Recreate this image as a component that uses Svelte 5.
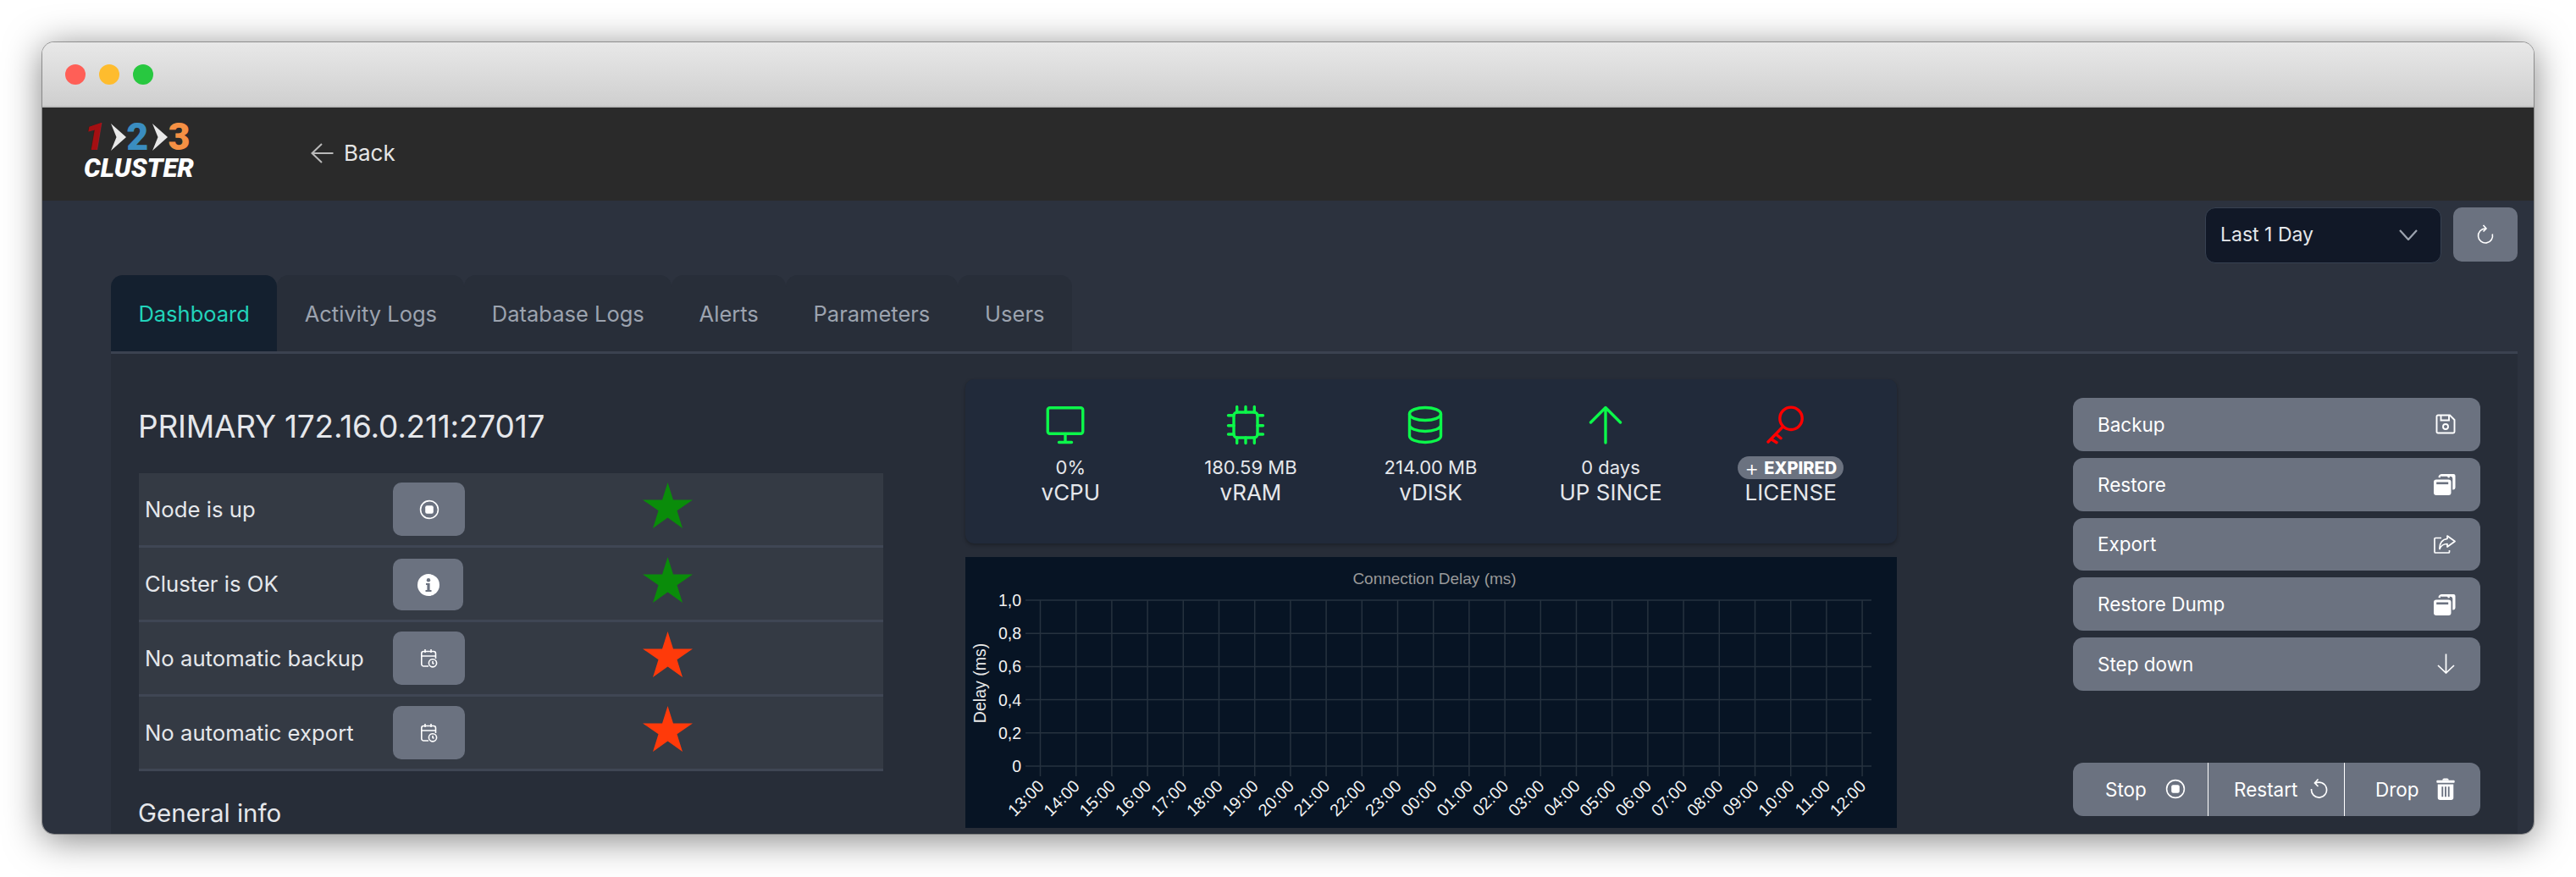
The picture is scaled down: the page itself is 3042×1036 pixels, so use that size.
<script>
  const tabs = ['Dashboard', 'Activity Logs', 'Database Logs', 'Alerts', 'Parameters', 'Users'];
  const checks = [
    { label: 'Node is up', icon: 'stop', ok: true },
    { label: 'Cluster is OK', icon: 'info', ok: true },
    { label: 'No automatic backup', icon: 'cal', ok: false },
    { label: 'No automatic export', icon: 'cal', ok: false }
  ];
  const stats = [
    { icon: 'monitor', value: '0%', label: 'vCPU' },
    { icon: 'cpu', value: '180.59 MB', label: 'vRAM' },
    { icon: 'disk', value: '214.00 MB', label: 'vDISK' },
    { icon: 'up', value: '0 days', label: 'UP SINCE' },
    { icon: 'key', value: '', label: 'LICENSE' }
  ];
  const actions = [
    { label: 'Backup', icon: 'save' },
    { label: 'Restore', icon: 'stack' },
    { label: 'Export', icon: 'share' },
    { label: 'Restore Dump', icon: 'stack' },
    { label: 'Step down', icon: 'down' }
  ];
  const hours = ['13', '14', '15', '16', '17', '18', '19', '20', '21', '22', '23', '00', '01', '02', '03', '04', '05', '06', '07', '08', '09', '10', '11', '12'];
  const yTicks = ['1,0', '0,8', '0,6', '0,4', '0,2', '0'];
</script>

{#snippet stopIcon()}
  <svg class="i24" viewBox="0 0 24 24" fill="none" stroke="currentColor" stroke-width="1.6"><circle cx="12" cy="12" r="10.4" /><rect x="7.2" y="7.2" width="9.6" height="9.6" rx="2" fill="currentColor" stroke="none" /></svg>
{/snippet}

{#snippet stackIcon()}
  <svg class="i26" viewBox="0 0 26 26"><rect x="0" y="7.5" width="20.5" height="18.5" rx="3" fill="#fff" /><rect x="3.2" y="10.5" width="14" height="2.6" fill="#6b7280" /><path d="M6.5 5.2C6.7 3.2 8 2 10 2H14.5C16.4 2 17.6 3.2 18 5.2" fill="none" stroke="#fff" stroke-width="2.2" /><path d="M9 1h14.5a2 2 0 0 1 2 2v14a2.4 2.4 0 0 1-2.4 2.4h-.8V6.8A3 3 0 0 0 19.3 3.8L9 3.8z" fill="#fff" /></svg>
{/snippet}

<div class="window">
  <div class="titlebar">
    <span class="dot red"></span>
    <span class="dot yellow"></span>
    <span class="dot green"></span>
  </div>

  <header class="header">
    <div class="logo">
      <div class="logo-top">
        <span class="n1">1</span>
        <svg class="chev c1" viewBox="0 0 18 32"><path d="M0 0L18 16L0 32L6.5 16z" fill="#e8e8e8" /></svg>
        <span class="n2">2</span>
        <svg class="chev c2" viewBox="0 0 18 32"><path d="M0 0L18 16L0 32L6.5 16z" fill="#e8e8e8" /></svg>
        <span class="n3">3</span>
      </div>
      <div class="logo-name">CLUSTER</div>
    </div>
    <div class="back">
      <svg class="back-arrow" viewBox="0 0 27 24" fill="none" stroke="#b9b9b9" stroke-width="2"><path d="M26.5 12H1.5M13 1L1.5 12L13 23" /></svg>
      <span>Back</span>
    </div>
  </header>

  <main class="main">
    <div class="toolbar">
      <div class="select">
        <span>Last 1 Day</span>
        <svg class="chevron" viewBox="0 0 22 13" fill="none" stroke="#9ca3af" stroke-width="2.2"><path d="M1 1L11 12L21 1" /></svg>
      </div>
      <button class="refresh" aria-label="Refresh">
        <svg class="i24" viewBox="0 0 24 24" fill="none" stroke="#fff" stroke-width="1.6"><path d="M12 5A8.5 8.5 0 1 0 20.3 11.5M9.5 1L13 5L9.5 8.5" /></svg>
      </button>
    </div>

    <nav class="tabs">
      {#each tabs as tab, i}
        <div class="tab" class:active={i === 0}>{tab}</div>
      {/each}
    </nav>

    <section class="panel">
      <div class="col-left">
        <h1>PRIMARY 172.16.0.211:27017</h1>
        <div class="checks">
          {#each checks as c}
            <div class="check">
              <span class="check-label">{c.label}</span>
              <button class="check-btn" aria-label={c.label}>
                {#if c.icon === 'stop'}
                  {@render stopIcon()}
                {:else if c.icon === 'info'}
                  <svg class="i26" viewBox="0 0 26 26"><circle cx="13" cy="13" r="13" fill="#fff" /><circle cx="13" cy="7.2" r="2.2" fill="#6b7280" /><path d="M10 11h4.6v8H16.5v2h-7v-2h1.9v-6H10z" fill="#6b7280" /></svg>
                {:else}
                  <svg class="i24" viewBox="0 0 24 24" fill="none" stroke="#fff" stroke-width="1.6"><path d="M19.5 12V6A2.5 2.5 0 0 0 17 3.5H5.3A2.5 2.5 0 0 0 2.8 6V18.5A2.5 2.5 0 0 0 5.3 21H11M7 1v4M14 1v4M2.8 9H19.5" /><circle cx="16" cy="17.3" r="4.6" /><path d="M16 15v2.5l1.4.8" /></svg>
                {/if}
              </button>
              <svg class="star" class:bad={!c.ok} viewBox="0 0 59 54"><path d="M29.5 0L36 20.5H59L40.5 33.3L47 54L29.5 41.5L12 54L18.5 33.3L0 20.5H23z" /></svg>
            </div>
          {/each}
        </div>
        <h2>General info</h2>
      </div>

      <div class="col-mid">
        <div class="stats">
          {#each stats as s}
            <div class="stat">
              <svg class="stat-icon" class:alert={s.icon === 'key'} viewBox="0 0 48 48" fill="none" stroke="currentColor" stroke-width="3.4" stroke-linecap="round" stroke-linejoin="round">
                {#if s.icon === 'monitor'}
                  <rect x="3.25" y="3.75" width="41.5" height="30.5" rx="2.5" /><path d="M24 34.5v10M16.5 44.5h15" />
                {:else if s.icon === 'cpu'}
                  <rect x="10" y="9" width="28" height="30" rx="4" /><path d="M13.7 2.5V9M24 2.5V9M34.3 2.5V9M13.7 39v6.5M24 39v6.5M34.3 39v6.5M3.5 12.7H10M3.5 24.7H10M3.5 35H10M38 12.7h6.5M38 24.7h6.5M38 35h6.5" />
                {:else if s.icon === 'disk'}
                  <ellipse cx="24" cy="11" rx="18.5" ry="7.5" /><path d="M5.5 11V37c0 4 8 7.5 18.5 7.5S42.5 41 42.5 37V11M5.5 24c0 4 8 7.5 18.5 7.5S42.5 28 42.5 24" />
                {:else if s.icon === 'up'}
                  <path d="M24 45V3.5M6.5 21L24 3.5L41.5 21" />
                {:else}
                  <circle cx="30" cy="16.3" r="13.2" /><path d="M20.5 26L3 44M12.3 35L18 39.7M7 41L13 44.7" />
                {/if}
              </svg>
              {#if s.value}
                <div class="stat-value">{s.value}</div>
              {:else}
                <div class="badge"><span class="plus">+</span><b>EXPIRED</b></div>
              {/if}
              <div class="stat-label">{s.label}</div>
            </div>
          {/each}
        </div>

        <div class="chart">
          <svg viewBox="0 0 1100 320" width="1100" height="320">
            <text class="c-title" x="554" y="32" text-anchor="middle">Connection Delay (ms)</text>
            <text class="c-axis" transform="translate(24 149) rotate(-90)" text-anchor="middle">Delay (ms)</text>
            {#each yTicks as t, i}
              <line class="grid" x1="71" x2="1070" y1={51 + 39.2 * i} y2={51 + 39.2 * i} />
              <text class="c-tick" x="66" y={58 + 39.2 * i} text-anchor="end">{t}</text>
            {/each}
            {#each hours as h, i}
              <line class="grid" x1={88.5 + 42.2 * i} x2={88.5 + 42.2 * i} y1="51" y2="259" />
              <text class="c-tick x" transform="translate({94 + 42.2 * i} 272) rotate(-45)" text-anchor="end">{h}:00</text>
            {/each}
          </svg>
        </div>
      </div>

      <div class="col-right">
        <div class="actions">
          {#each actions as a}
            <button class="action">
              <span>{a.label}</span>
              {#if a.icon === 'save'}
                <svg class="i24" viewBox="0 0 24 24" fill="none" stroke="#fff" stroke-width="1.9"><path d="M3 1.5H17L22.5 7V21A1.5 1.5 0 0 1 21 22.5H3A1.5 1.5 0 0 1 1.5 21V3A1.5 1.5 0 0 1 3 1.5z" /><path d="M6.5 1.5V7.5H16V1.5" /><circle cx="12" cy="15" r="3" /></svg>
              {:else if a.icon === 'stack'}
                {@render stackIcon()}
              {:else if a.icon === 'share'}
                <svg class="i26" viewBox="0 0 26 22" fill="none" stroke="#fff" stroke-width="1.7"><path d="M9 3.5H2A1 1 0 0 0 1 4.5V20A1 1 0 0 0 2 21H17.5A1 1 0 0 0 18.5 20V18" /><path d="M16 1L25 7.5L16 14V10.5C11.5 10.5 8.5 12.5 7 16.5C6.5 10 10 5 16 4.5z" stroke-linejoin="round" /></svg>
              {:else}
                <svg class="i24" viewBox="0 0 24 24" fill="none" stroke="#fff" stroke-width="1.7"><path d="M12.5 0.5V23M3 14L12.5 23L22 14" /></svg>
              {/if}
            </button>
          {/each}
        </div>
        <div class="group">
          <button class="part p1"><span>Stop</span>{@render stopIcon()}</button>
          <button class="part p2"><span>Restart</span>
            <svg class="i24" viewBox="0 0 24 24" fill="none" stroke="#fff" stroke-width="1.7"><path d="M8.2 5.2A9 9 0 1 1 3.6 12M11.5 0.5L7.5 5L11.5 9" /></svg>
          </button>
          <button class="part p3"><span>Drop</span>
            <svg class="i26" viewBox="0 0 24 28"><rect x="0.5" y="3" width="23" height="3.2" rx="1" fill="#fff" /><path d="M8 3C8 1.4 9 .6 10 .6h4c1 0 2 .8 2 2.4z" fill="#fff" /><path fill-rule="evenodd" d="M2 8H22V25A3 3 0 0 1 19 28H5A3 3 0 0 1 2 25zM7 11V24H9V11zM11 11V24H13V11zM15 11V24H17V11z" fill="#fff" /></svg>
          </button>
        </div>
      </div>
    </section>
  </main>
</div>

<style>
  :global(body) {
    margin: 0;
    background: #fff;
    overflow: hidden;
  }
  :global(#app) {
    height: 1036px;
    padding: 50px 50px 0;
    box-sizing: border-box;
  }
  button {
    border: 0;
    padding: 0;
    color: #fff;
    font: inherit;
    background: #6b7280;
  }
  svg {
    display: block;
    flex: none;
  }
  .i24 {
    width: 24px;
    height: 24px;
  }
  .i26 {
    width: 26px;
    height: 26px;
  }
  .window {
    width: 2942px;
    height: 935px;
    display: flex;
    flex-direction: column;
    border-radius: 14px;
    overflow: hidden;
    box-shadow: 0 0 0 1px rgba(90, 90, 90, 0.55), 0 6px 44px rgba(0, 0, 0, 0.5);
    font-family: Inter, "Liberation Sans", sans-serif;
    color: #e5e7eb;
  }
  .titlebar {
    flex: none;
    height: 77px;
    box-sizing: border-box;
    display: flex;
    align-items: center;
    gap: 16px;
    padding-left: 27px;
    background: linear-gradient(#e8e8e8, #cfcfcf);
    border-bottom: 2px solid #bdbdbd;
  }
  .dot {
    width: 24px;
    height: 24px;
    border-radius: 50%;
  }
  .red { background: #ff5f57; }
  .yellow { background: #febc2e; }
  .green { background: #28c840; }
  .header {
    flex: none;
    height: 110px;
    display: flex;
    align-items: center;
    padding-left: 49px;
    background: #2a2a2a;
  }
  .logo {
    width: 130px;
    margin-top: -6px;
    font-family: Roboto, sans-serif;
  }
  .logo-top {
    display: flex;
    align-items: center;
    height: 34px;
    font-size: 45px;
    font-weight: 900;
    line-height: 34px;
  }
  .n1 { color: #a50f12; font-style: italic; }
  .n2 { color: #3a8dc0; }
  .n3 { color: #f59044; }
  .chev {
    width: 18px;
    height: 32px;
  }
  .c1 { margin-left: 7px; }
  .c2 { margin-left: 5px; }
  .logo-name {
    margin-top: 6px;
    font-size: 31px;
    line-height: 28px;
    font-weight: 900;
    font-style: italic;
    color: #fff;
  }
  .back {
    display: flex;
    align-items: center;
    gap: 12px;
    margin-left: 138px;
    margin-top: -3px;
    font-size: 26px;
    color: #e5e5e5;
  }
  .back-arrow {
    width: 27px;
    height: 24px;
  }
  .main {
    flex: 1;
    min-height: 0;
    padding: 8px 19px 0 81px;
    background: #2c323e;
  }
  .toolbar {
    height: 80px;
    display: flex;
    justify-content: flex-end;
    align-items: flex-start;
    gap: 14px;
  }
  .select {
    width: 279px;
    height: 66px;
    box-sizing: border-box;
    display: flex;
    align-items: center;
    justify-content: space-between;
    padding: 0 27px 2px 17px;
    background: #111827;
    border: 1px solid #374151;
    border-radius: 12px;
    font-size: 23px;
    color: #e5e7eb;
  }
  .chevron {
    width: 22px;
    height: 13px;
  }
  .refresh {
    width: 76px;
    height: 64px;
    display: flex;
    align-items: center;
    justify-content: center;
    border-radius: 10px;
  }
  .tabs {
    height: 93px;
    box-sizing: border-box;
    display: flex;
    border-bottom: 3px solid #3b4250;
  }
  .tab {
    padding: 0 32.4px;
    display: flex;
    align-items: center;
    border-radius: 14px 14px 0 0;
    background: #282e39;
    font-size: 25.5px;
    color: #9ca3af;
  }
  .tab.active {
    background: #14202f;
    color: #22d3bb;
  }
  .panel {
    height: 567px;
    box-sizing: border-box;
    display: grid;
    grid-template-columns: 879px 1100px 592px;
    column-gap: 97px;
    padding: 30px 0 0 33px;
    background: #272d38;
    overflow: hidden;
  }
  .col-left h1 {
    margin: 33px 0 0 -1px;
    font-size: 37px;
    line-height: 46px;
    letter-spacing: -0.22px;
    font-weight: 400;
    color: #e5e7eb;
  }
  .checks {
    margin-top: 32px;
    background: #343a44;
  }
  .check {
    height: 85px;
    display: flex;
    align-items: center;
    padding-left: 7px;
    border-bottom: 3px solid #3f4654;
    font-size: 25.7px;
  }
  .check-label {
    width: 293px;
  }
  .check-btn {
    width: 85px;
    height: 63px;
    display: flex;
    align-items: center;
    justify-content: center;
    border-radius: 10px;
  }
  .check:nth-child(2) .check-btn {
    width: 83px;
    height: 61px;
    margin: 2px 2px 0 0;
  }
  .star {
    width: 59px;
    height: 54px;
    margin: 0 0 10px 210px;
    fill: #0a8c0a;
  }
  .star.bad {
    fill: #ff3a0a;
  }
  .col-left h2 {
    margin: 31px 0 0 -1px;
    font-size: 29.5px;
    line-height: 36px;
    font-weight: 400;
    color: #e5e7eb;
  }
  .stats {
    height: 194px;
    box-sizing: border-box;
    display: grid;
    grid-template-columns: repeat(5, 212.6px);
    padding: 30px 0 0 18px;
    background: #212a3a;
    border-radius: 10px;
    box-shadow: 0 2px 4px rgba(0, 0, 0, 0.3);
  }
  .stat {
    display: flex;
    flex-direction: column;
    align-items: center;
  }
  .stat-icon {
    width: 48px;
    height: 48px;
    margin-right: 12px;
    color: #0cf74a;
  }
  .stat-icon.alert {
    color: #ff0000;
  }
  .stat-value {
    height: 27px;
    margin-top: 13px;
    font-size: 22px;
    line-height: 27px;
    color: #e5e7eb;
  }
  .badge {
    height: 27px;
    margin-top: 13px;
    padding: 0 8px;
    display: flex;
    align-items: center;
    gap: 6px;
    border-radius: 14px;
    background: #6b7280;
    font-size: 20px;
    color: #fff;
  }
  .badge b {
    font-weight: 800;
  }
  .plus {
    font-size: 26px;
    font-weight: 300;
    line-height: 27px;
  }
  .stat-label {
    margin-top: 0;
    font-size: 26px;
    line-height: 32px;
    color: #e5e7eb;
  }
  .chart {
    margin-top: 16px;
    height: 320px;
    background: #071424;
  }
  .grid {
    stroke: #26323f;
    stroke-width: 1.5;
  }
  .c-title {
    font: 19px "Liberation Sans", sans-serif;
    fill: #9a9a9a;
  }
  .c-axis {
    font: 19.5px "Liberation Sans", sans-serif;
    fill: #e8e8e8;
  }
  .c-tick {
    font: 19.5px "Liberation Sans", sans-serif;
    fill: #f2f2f2;
  }
  .c-tick.x {
    font-size: 20px;
  }
  .col-right {
    box-sizing: border-box;
    width: 592px;
    padding: 22px 0 0 111px;
  }
  .actions {
    display: flex;
    flex-direction: column;
    gap: 8px;
  }
  .action {
    height: 62.75px;
    display: flex;
    align-items: center;
    justify-content: space-between;
    padding: 0 29px;
    border-radius: 12px;
    font-size: 22.5px;
  }
  .group {
    margin-top: 85px;
    display: flex;
    height: 63px;
    border-radius: 12px;
    overflow: hidden;
  }
  .part {
    height: 63px;
    display: flex;
    align-items: center;
    font-size: 22.5px;
    box-sizing: border-box;
  }
  .p1 {
    width: 160px;
    padding-left: 38px;
    gap: 22px;
    border-right: 1px solid #fff;
  }
  .p2 {
    width: 161px;
    padding-left: 30px;
    gap: 13px;
    border-right: 1px solid #fff;
  }
  .p3 {
    width: 160px;
    padding-left: 36px;
    gap: 18px;
  }
</style>
